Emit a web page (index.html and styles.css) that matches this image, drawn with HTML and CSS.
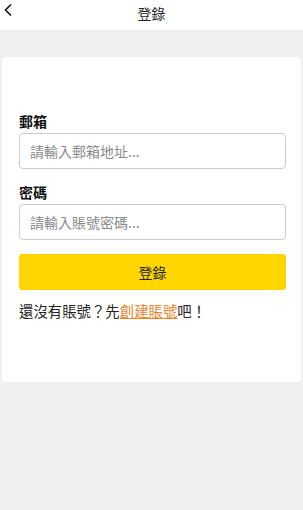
FILE: index.html
```html
<!DOCTYPE html>
<html lang="zh-Hant">
  <head>
    <meta charset="UTF-8" />
    <meta name="viewport" content="width=device-width, initial-scale=1.0" />
    <title>登錄</title>
    <link rel="stylesheet" href="styles.css">
  </head>
  <body>
    <header class="top-bar">
      <a href="#" class="back-btn">
        <svg width="10" height="14" viewBox="0 0 10 14">
          <path d="M8 1.5 L2.5 7 L8 12.5" fill="none" stroke="#111" stroke-width="1.6" />
        </svg>
      </a>
      <div class="top-title">登錄</div>
    </header>

    <main class="page">
      <div class="login-card">
        <label class="field-label" for="email">郵箱</label>
        <input id="email" class="field-input" type="text" placeholder="請輸入郵箱地址..." />

        <label class="field-label second" for="pwd">密碼</label>
        <input id="pwd" class="field-input" type="password" placeholder="請輸入賬號密碼..." />

        <button class="btn-login">登錄</button>

        <p class="signup-tip">還沒有賬號？先<a href="#">創建賬號</a>吧！</p>
      </div>
    </main>
  </body>
</html>
```

FILE: styles.css
```css
/* 기본 */
body {
  margin: 0;
  font-family: "Noto Sans CJK TC", "Noto Sans", sans-serif;
  background: #f0f0f0;
  color: #111;
  min-height: 100vh;
}

/* 상단 바 */
.top-bar {
  height: 30px;
  background: #fff;
  display: flex;
  align-items: center;
  justify-content: center;
  position: relative;
  box-shadow: 0 1px 2px rgba(0, 0, 0, 0.04);
}

.back-btn {
  position: absolute;
  left: 3px;
  top: 3px;
  display: flex;
}

.top-title {
  font-size: 14px;
  line-height: 20px;
  color: #222;
  margin-top: -4px;
}

/* 카드 */
.page {
  padding-top: 27px;
}

.login-card {
  margin: 0 2px;
  background: #fff;
  border-radius: 4px;
  padding: 54px 15px 61px 17px;
}

.field-label {
  display: block;
  font-size: 14px;
  font-weight: 700;
  line-height: 20px;
  margin-bottom: 2px;
}

.field-label.second {
  margin-top: 13px;
}

.field-input {
  display: block;
  box-sizing: border-box;
  width: 100%;
  height: 36px;
  border: 1px solid #ccc;
  border-radius: 4px;
  padding: 0 10px;
  font-family: inherit;
  font-size: 14px;
  outline: none;
}

.field-input::placeholder {
  color: #8a8a8a;
}

.btn-login {
  display: block;
  width: 100%;
  height: 36px;
  margin-top: 14px;
  border: none;
  border-radius: 3px;
  background: #ffd600;
  font-family: inherit;
  font-size: 14px;
  color: #222;
}

.signup-tip {
  margin: 11px 0 0;
  font-size: 14.4px;
  line-height: 20px;
  color: #222;
}

.signup-tip a {
  color: #e8842a;
  text-decoration: underline;
}
```
